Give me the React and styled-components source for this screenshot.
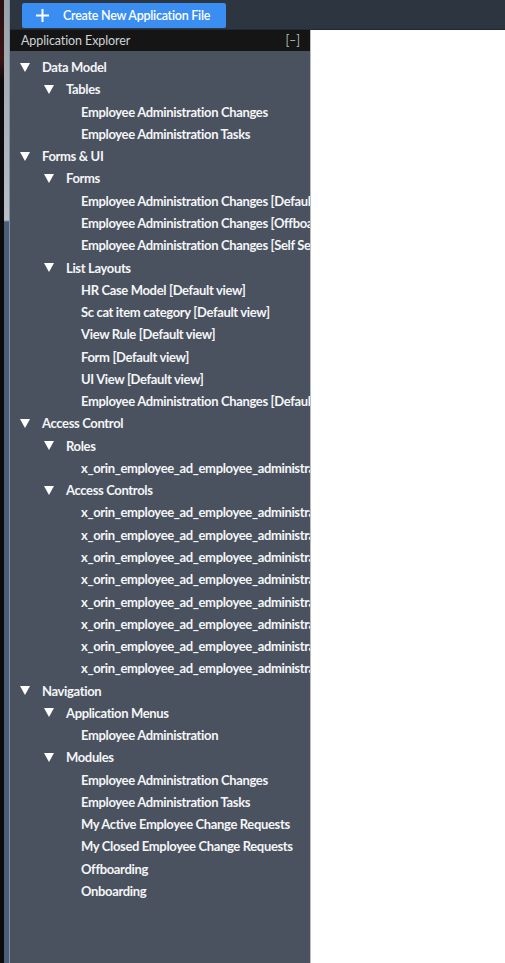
import React from "react";
import styled, { createGlobalStyle } from "styled-components";

const GlobalStyle = createGlobalStyle`
  html, body {
    margin: 0;
    padding: 0;
    background: #ffffff;
  }
  body {
    font-family: Lato, "Open Sans", sans-serif;
  }
`;

const tree = [
  {
    label: "Data Model",
    children: [
      {
        label: "Tables",
        items: ["Employee Administration Changes", "Employee Administration Tasks"],
      },
    ],
  },
  {
    label: "Forms & UI",
    children: [
      {
        label: "Forms",
        items: [
          "Employee Administration Changes [Default view]",
          "Employee Administration Changes [Offboarding]",
          "Employee Administration Changes [Self Service]",
        ],
      },
      {
        label: "List Layouts",
        items: [
          "HR Case Model [Default view]",
          "Sc cat item category [Default view]",
          "View Rule [Default view]",
          "Form [Default view]",
          "UI View [Default view]",
          "Employee Administration Changes [Default view]",
        ],
      },
    ],
  },
  {
    label: "Access Control",
    children: [
      {
        label: "Roles",
        items: ["x_orin_employee_ad_employee_administration_user"],
      },
      {
        label: "Access Controls",
        items: Array(8).fill("x_orin_employee_ad_employee_administration_changes"),
      },
    ],
  },
  {
    label: "Navigation",
    children: [
      {
        label: "Application Menus",
        items: ["Employee Administration"],
      },
      {
        label: "Modules",
        items: [
          "Employee Administration Changes",
          "Employee Administration Tasks",
          "My Active Employee Change Requests",
          "My Closed Employee Change Requests",
          "Offboarding",
          "Onboarding",
        ],
      },
    ],
  },
];

const Page = styled.div`
  display: flex;
  height: 963px;
  overflow: hidden;
`;

// sliver of the window behind, on the far left
const EdgeStrip = styled.div`
  width: 10px;
  flex: none;
  display: flex;
  background: #0c0c0e;
`;

const EdgeDark = styled.div`
  width: 4px;
  background: linear-gradient(#2a1012 0, #3a1416 60px, #0c0c0e 80px);
`;

const EdgeScroll = styled.div`
  width: 5px;
  background: linear-gradient(#9aa1a8 0, #b9bfc4 220px, #4a5f77 222px);
`;

const EdgeLine = styled.div`
  width: 1px;
  background: #7f92a6;
`;

const Main = styled.div`
  flex: 1;
  display: flex;
  flex-direction: column;
  min-width: 0;
`;

const TopBar = styled.div`
  height: 30px;
  flex: none;
  background: #2d3540;
  display: flex;
  align-items: center;
  padding-left: 12px;
  border-bottom: 1px solid #242a33;
  box-sizing: border-box;
`;

const CreateButton = styled.button`
  height: 25px;
  width: 204px;
  border: none;
  border-radius: 2px;
  background: #3a8ef2;
  color: #ffffff;
  font-family: Lato, "Open Sans", sans-serif;
  font-size: 12.5px;
  letter-spacing: -0.25px;
  font-weight: 600;
  display: flex;
  align-items: center;
  padding: 0 0 0 14px;
  gap: 14px;
  margin-top: 1px;
`;

const Body = styled.div`
  flex: 1;
  display: flex;
  min-height: 0;
`;

const Explorer = styled.div`
  width: 300px;
  flex: none;
  background: #4a5260;
  border-right: 1px solid #b9bdc4;
  display: flex;
  flex-direction: column;
  overflow: hidden;
`;

const ExplorerHeader = styled.div`
  height: 21px;
  flex: none;
  background: #151515;
  display: flex;
  align-items: center;
  justify-content: space-between;
  padding: 0 10px 0 11px;
  color: #cfd3d6;
  font-size: 12.5px;
  letter-spacing: -0.1px;
`;

const Collapse = styled.span`
  color: #a9b2a8;
  font-size: 12.5px;
`;

const TreeList = styled.ul`
  list-style: none;
  margin: 0;
  padding: 5px 0 0 0;
`;

const Row = styled.li`
  height: 22.27px;
  display: flex;
  align-items: center;
  padding-left: ${(p) => p.$indent}px;
  color: #f4f5f6;
  font-size: 13px;
  letter-spacing: -0.35px;
  font-weight: 700;
  white-space: nowrap;
  overflow: hidden;
`;

const Caret = styled.svg`
  width: 10px;
  height: 9px;
  flex: none;
  margin-right: 12px;
`;

const Blank = styled.div`
  flex: 1;
  background: #ffffff;
`;

function Triangle() {
  return (
    <Caret viewBox="0 0 10 9">
      <polygon points="0,0 10,0 5,9" fill="#ffffff" />
    </Caret>
  );
}

function PlusIcon() {
  return (
    <svg width="13" height="13" viewBox="0 0 13 13">
      <rect x="5.5" y="0" width="2" height="13" fill="#ffffff" />
      <rect x="0" y="5.5" width="13" height="2" fill="#ffffff" />
    </svg>
  );
}

export default function App() {
  const rows = [];
  tree.forEach((group) => {
    rows.push(
      <Row key={group.label} $indent={10}>
        <Triangle />
        {group.label}
      </Row>
    );
    group.children.forEach((child) => {
      rows.push(
        <Row key={group.label + child.label} $indent={34}>
          <Triangle />
          {child.label}
        </Row>
      );
      child.items.forEach((item, i) => {
        rows.push(
          <Row key={child.label + i} $indent={71}>
            {item}
          </Row>
        );
      });
    });
  });

  return (
    <>
      <GlobalStyle />
      <Page>
        <EdgeStrip>
          <EdgeDark />
          <EdgeScroll />
          <EdgeLine />
        </EdgeStrip>
        <Main>
          <TopBar>
            <CreateButton>
              <PlusIcon />
              Create New Application File
            </CreateButton>
          </TopBar>
          <Body>
            <Explorer>
              <ExplorerHeader>
                Application Explorer
                <Collapse>[–]</Collapse>
              </ExplorerHeader>
              <TreeList>{rows}</TreeList>
            </Explorer>
            <Blank />
          </Body>
        </Main>
      </Page>
    </>
  );
}
